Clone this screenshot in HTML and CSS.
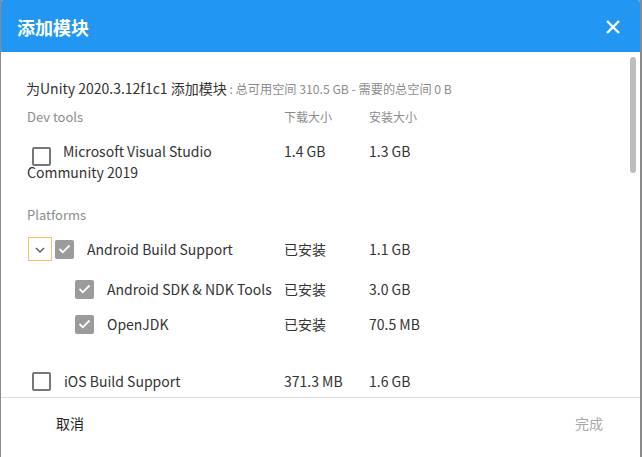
FILE: index.html
```html
<!DOCTYPE html>
<html lang="zh">
<head>
<meta charset="utf-8">
<link rel="stylesheet" href="styles.css">
</head>
<body>
<div class="dialog">
  <div class="titlebar">
    <span class="title">添加模块</span>
    <svg class="close" width="16" height="16" viewBox="0 0 16 16"><path d="M2 2 L14 14 M14 2 L2 14" stroke="#fff" stroke-width="2.4" fill="none"/></svg>
  </div>
  <div class="body">
    <div class="scroll">
      <div class="intro"><span class="main">为Unity 2020.3.12f1c1 添加模块</span><span class="sub"> : 总可用空间 310.5 GB - 需要的总空间 0 B</span></div>

      <div class="row head">
        <div class="section">Dev tools</div>
        <div class="colh">下载大小</div>
        <div class="colh">安装大小</div>
      </div>

      <div class="row msvs">
        <div class="name wrap"><span class="cb"></span>Microsoft Visual Studio Community 2019</div>
        <div class="val">1.4 GB</div>
        <div class="val">1.3 GB</div>
      </div>

      <div class="section plat">Platforms</div>

      <div class="row item android">
        <div class="name flex">
          <span class="chev"><svg width="10" height="6" viewBox="0 0 10 6"><path d="M1 1 L5 5 L9 1" stroke="#666" stroke-width="1.5" fill="none"/></svg></span>
          <span class="cb checked"><svg width="13" height="10" viewBox="0 0 13 10"><path d="M1.5 5 L4.8 8.3 L11.5 1.5" stroke="#fff" stroke-width="1.8" fill="none"/></svg></span>
          <span class="label">Android Build Support</span>
        </div>
        <div class="val">已安装</div>
        <div class="val">1.1 GB</div>
      </div>

      <div class="row item subitem sdk">
        <div class="name flex">
          <span class="cb checked"><svg width="13" height="10" viewBox="0 0 13 10"><path d="M1.5 5 L4.8 8.3 L11.5 1.5" stroke="#fff" stroke-width="1.8" fill="none"/></svg></span>
          <span class="label">Android SDK &amp; NDK Tools</span>
        </div>
        <div class="val">已安装</div>
        <div class="val">3.0 GB</div>
      </div>

      <div class="row item subitem jdk">
        <div class="name flex">
          <span class="cb checked"><svg width="13" height="10" viewBox="0 0 13 10"><path d="M1.5 5 L4.8 8.3 L11.5 1.5" stroke="#fff" stroke-width="1.8" fill="none"/></svg></span>
          <span class="label">OpenJDK</span>
        </div>
        <div class="val">已安装</div>
        <div class="val">70.5 MB</div>
      </div>

      <div class="row item ios">
        <div class="name flex">
          <span class="cb plain"></span>
          <span class="label">iOS Build Support</span>
        </div>
        <div class="val">371.3 MB</div>
        <div class="val">1.6 GB</div>
      </div>
    </div>
    <div class="thumb"></div>
  </div>
  <div class="footer">
    <span class="btn cancel">取消</span>
    <span class="btn done">完成</span>
  </div>
</div>
</body>
</html>
```

FILE: styles.css
```css
html, body {
  margin: 0;
  padding: 0;
}
body {
  background: #8a8a8a;
  width: 642px;
  height: 457px;
  overflow: hidden;
  font-family: "Noto Sans CJK SC", "Noto Sans", sans-serif;
  color: #333;
}
.dialog {
  margin-left: 1px;
  width: 639px;
  height: 457px;
  background: #fff;
  border-radius: 3px 3px 0 0;
  display: flex;
  flex-direction: column;
  overflow: hidden;
}
.titlebar {
  height: 52px;
  flex: none;
  background: #2196f3;
  display: flex;
  align-items: center;
  justify-content: space-between;
  padding: 0 19px 0 16px;
}
.title {
  color: #fff;
  font-size: 18px;
  font-weight: bold;
  line-height: 24px;
  margin-top: 2px;
}
.close {
  display: block;
  margin-top: 1px;
}
.body {
  position: relative;
  height: 345px;
  flex: none;
  overflow: hidden;
  border-bottom: 1px solid #dcdcdc;
}
.scroll {
  padding: 26px 0 0 26px;
}
.thumb {
  position: absolute;
  left: 629px;
  top: 5px;
  width: 6px;
  height: 116px;
  border-radius: 3px;
  background: #bdbdbd;
}
.intro {
  line-height: 18px;
  margin-left: -1px;
  white-space: nowrap;
}
.intro .main {
  font-size: 14px;
  color: #333;
}
.intro .sub {
  font-size: 12.2px;
  color: #8c8c8c;
}
.row {
  display: grid;
  grid-template-columns: 257px 85px 1fr;
  align-items: center;
}
.head {
  margin-top: 10px;
  line-height: 18px;
}
.section {
  font-size: 13px;
  color: #8c8c8c;
  line-height: 18px;
}
.colh {
  font-size: 12px;
  color: #8c8c8c;
}
.name, .val {
  font-size: 14px;
  line-height: 20px;
  color: #333;
}
.msvs {
  margin-top: 15px;
  align-items: start;
}
.wrap .cb {
  display: inline-block;
  vertical-align: -5px;
  margin: -4px 12px -4px 5px;
}
.cb {
  box-sizing: border-box;
  width: 19px;
  height: 19px;
  border: 2px solid #777;
  border-radius: 2px;
  flex: none;
}
.cb.checked {
  border: none;
  background: #9b9b9b;
  display: flex;
  align-items: center;
  justify-content: center;
}
.cb.plain {
  margin-left: 5px;
}
.plat {
  margin-top: 24px;
}
.item {
  height: 24px;
}
.flex {
  display: flex;
  align-items: center;
}
.label {
  margin-left: 13px;
}
.android {
  margin-top: 13px;
}
.chev {
  box-sizing: border-box;
  width: 24px;
  height: 24px;
  border: 1px solid #f3c46c;
  margin-left: 1px;
  margin-right: 3px;
  display: flex;
  align-items: center;
  justify-content: center;
}
.chev svg { display: block; margin-top: 1px; }
.subitem .name {
  padding-left: 48px;
}
.sdk {
  margin-top: 16px;
}
.jdk {
  margin-top: 11px;
}
.ios {
  margin-top: 33px;
}
.footer {
  flex: 1;
  display: flex;
  align-items: center;
  justify-content: space-between;
  padding: 0 37px 0 55px;
  font-size: 14px;
}
.btn {
  line-height: 20px;
  margin-top: -10px;
}
.cancel { color: #222; }
.done { color: #a8a8a8; }
```
